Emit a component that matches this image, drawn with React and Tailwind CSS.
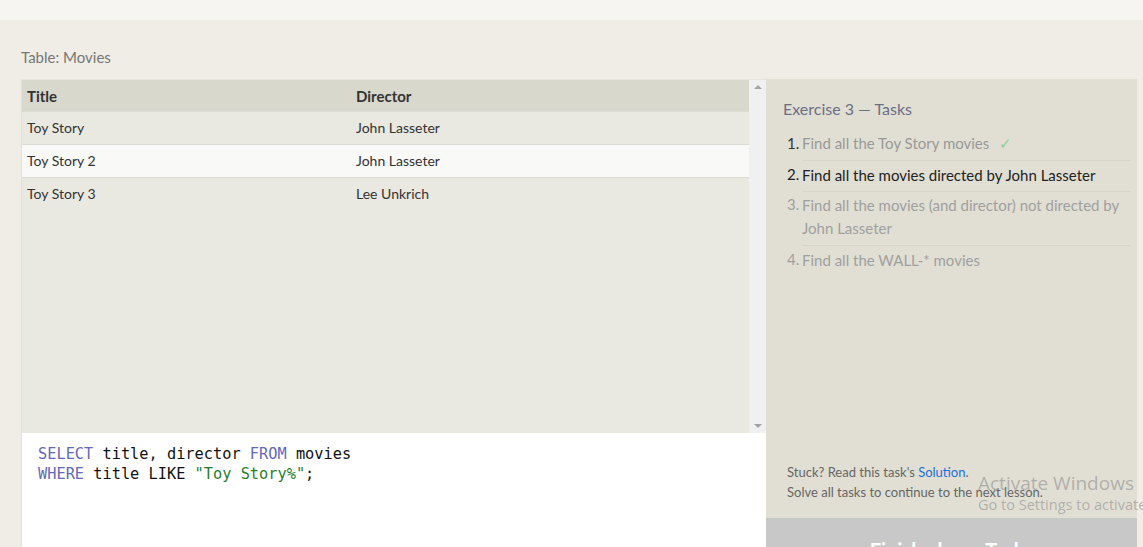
import React from "react";

const ui = { fontFamily: "Lato, 'Open Sans', sans-serif" };
const mono = { fontFamily: "'DejaVu Sans Mono', 'Liberation Mono', monospace" };

function Row({ title, director, white, last }) {
  return (
    <div className={`flex h-[33px] items-center pb-[2px] text-[14px] text-[#333] ${last ? "" : "border-b border-[#dcdbd3]"} ${white ? "bg-[#f9f9f8]" : "bg-[#e9e8e1]"}`}>
      <div className="w-[329px] pl-[5px]">{title}</div>
      <div className="flex-1 pl-[5px]">{director}</div>
    </div>
  );
}

function Task({ n, children, first, numClass, textClass, extra, shift }) {
  return (
    <li className="flex">
      <span className={`w-[15px] shrink-0 pt-[2px] pb-[5px] leading-[23px] ${shift ? "relative top-[1px]" : ""} ${numClass}`}>{n}.</span>
      <div className={`flex-1 mr-[7px] pt-[2px] pb-[5px] leading-[23px] ${first ? "" : "border-t border-[#d7d5ca]"} ${textClass}`}>
        <span className={shift ? "relative top-[1px]" : ""}>{children}</span>
        {extra}
      </div>
    </li>
  );
}

export default function App() {
  return (
    <div className="relative w-[1143px] h-[547px] overflow-hidden bg-[#efede6]" style={ui}>
      <div className="h-[20px] bg-[#f6f5f1]" />
      <div className="pl-[21px] pt-[28px]">
        <div className="h-[18px] text-[15px] leading-[18px] text-[#777]">Table: Movies</div>
        <div className="mt-[13px] flex h-[503px]">
          {/* left column */}
          <div className="flex w-[745px] flex-col border-l border-[#e2e0d8]">
            <div className="flex h-[354px] border-t border-[#e6e4dc]">
              <div className="flex-1 bg-[#e9e8e1]">
                <div className="flex h-[32px] items-center bg-[#d9d8cd] text-[15px] font-bold text-[#333] border-b border-[#dcdbd3]">
                  <div className="w-[329px] pl-[5px] pt-[1px]">Title</div>
                  <div className="flex-1 pl-[5px] pt-[1px]">Director</div>
                </div>
                <Row title="Toy Story" director="John Lasseter" />
                <Row title="Toy Story 2" director="John Lasseter" white />
                <Row title="Toy Story 3" director="Lee Unkrich" last />
              </div>
              <div className="flex w-[17px] flex-col items-center justify-between bg-[#f0f0f0] py-[5px]">
                <div className="h-0 w-0 border-x-[4px] border-b-[4px] border-x-transparent border-b-[#a3a3a3]" />
                <div className="h-0 w-0 border-x-[4px] border-t-[4px] border-x-transparent border-t-[#a3a3a3]" />
              </div>
            </div>
            <div className="flex-1 bg-white pl-[16px] pt-[11px] text-[15.3px] leading-[20px] text-[#111]" style={mono}>
              <div className="whitespace-pre">
                <span className="text-[#6469b8]">SELECT</span> title, director <span className="text-[#6469b8]">FROM</span> movies
              </div>
              <div className="whitespace-pre">
                <span className="text-[#6469b8]">WHERE</span> title LIKE <span className="text-[#2a7d2a]">"Toy Story%"</span>;
              </div>
            </div>
          </div>
          {/* right column */}
          <div className="flex w-[371px] flex-col bg-[#e1dfd4]">
            <div className="pl-[17px] pt-[20px]">
              <div className="text-[16px] leading-[20px] text-[#6b6f85]">Exercise 3 — Tasks</div>
              <ol className="mt-[11px] pl-[4px] text-[15px]">
                <Task n={1} first numClass="text-[#333]" textClass="text-[#999]" extra={<span className="ml-[10px] text-[#8fcf8f]">✓</span>}>
                  Find all the Toy Story movies
                </Task>
                <Task n={2} shift numClass="text-[#222]" textClass="text-[#222]">
                  Find all the movies directed by John Lasseter
                </Task>
                <Task n={3} numClass="text-[#a0a0a0]" textClass="text-[#a0a0a0]">
                  Find all the movies (and director) not directed by John Lasseter
                </Task>
                <Task n={4} shift numClass="text-[#a0a0a0]" textClass="text-[#a0a0a0]">
                  Find all the WALL-* movies
                </Task>
              </ol>
            </div>
            <div className="flex-1" />
            <div className="pl-[21px] pb-[16px] text-[13px] leading-[20px] text-[#666]">
              <div>
                Stuck? Read this task's <span className="text-[#1a6ee0]">Solution</span>.
              </div>
              <div>Solve all tasks to continue to the next lesson.</div>
            </div>
            <div className="flex h-[64px] items-center justify-center bg-[#c8c8c8] text-[20px] font-bold text-white">
              Finish above Tasks
            </div>
          </div>
        </div>
      </div>
      {/* OS watermark overlay */}
      <div className="pointer-events-none absolute left-[978px] top-[470px] whitespace-nowrap text-[#9a9a9a]/70" style={{ fontFamily: "'Open Sans', sans-serif" }}>
        <div className="text-[19px] leading-[26px]">Activate Windows</div>
        <div className="text-[14.5px] leading-[18px]">Go to Settings to activate Windows.</div>
      </div>
    </div>
  );
}
